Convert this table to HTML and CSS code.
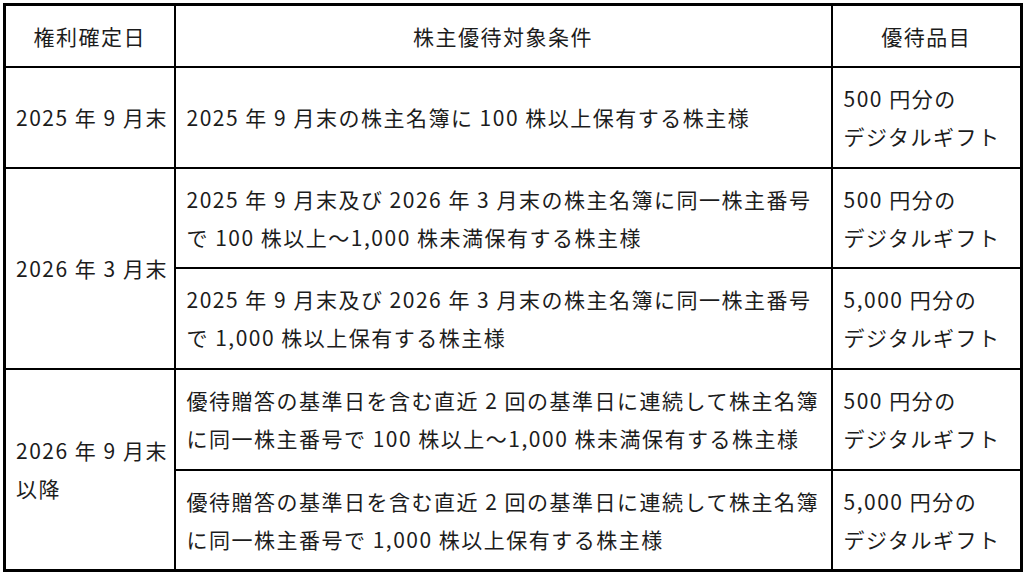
FILE: index.html
```html
<!DOCTYPE html>
<html lang="ja">
<head>
<meta charset="utf-8">
<link rel="stylesheet" href="styles.css">
</head>
<body>
<table class="yutai">
  <colgroup>
    <col class="c1">
    <col class="c2">
    <col class="c3">
  </colgroup>
  <tr class="head">
    <th>権利確定日</th>
    <th>株主優待対象条件</th>
    <th>優待品目</th>
  </tr>
  <tr class="row">
    <td class="date">2025 年 9 月末</td>
    <td class="cond"><span class="ln">2025 年 9 月末の株主名簿に 100 株以上保有する株主様</span></td>
    <td class="gift"><span class="ln">500 円分の</span><span class="ln">デジタルギフト</span></td>
  </tr>
  <tr class="row short">
    <td class="date" rowspan="2">2026 年 3 月末</td>
    <td class="cond"><span class="ln">2025 年 9 月末及び 2026 年 3 月末の株主名簿に同一株主番号</span><span class="ln">で 100 株以上～1,000 株未満保有する株主様</span></td>
    <td class="gift"><span class="ln">500 円分の</span><span class="ln">デジタルギフト</span></td>
  </tr>
  <tr class="row">
    <td class="cond"><span class="ln">2025 年 9 月末及び 2026 年 3 月末の株主名簿に同一株主番号</span><span class="ln">で 1,000 株以上保有する株主様</span></td>
    <td class="gift"><span class="ln">5,000 円分の</span><span class="ln">デジタルギフト</span></td>
  </tr>
  <tr class="row">
    <td class="date" rowspan="2"><span class="ln">2026 年 9 月末</span><span class="ln">以降</span></td>
    <td class="cond"><span class="ln">優待贈答の基準日を含む直近 2 回の基準日に連続して株主名簿</span><span class="ln">に同一株主番号で 100 株以上～1,000 株未満保有する株主様</span></td>
    <td class="gift"><span class="ln">500 円分の</span><span class="ln">デジタルギフト</span></td>
  </tr>
  <tr class="row">
    <td class="cond"><span class="ln">優待贈答の基準日を含む直近 2 回の基準日に連続して株主名簿</span><span class="ln">に同一株主番号で 1,000 株以上保有する株主様</span></td>
    <td class="gift"><span class="ln">5,000 円分の</span><span class="ln">デジタルギフト</span></td>
  </tr>
</table>
</body>
</html>
```

FILE: styles.css
```css
html, body {
  margin: 0;
  padding: 0;
  background: #ffffff;
}

body {
  padding: 3px 0 0 3px;
  font-family: "Noto Sans CJK JP", "Noto Sans", sans-serif;
  color: #1c1c1c;
}

.yutai {
  border-collapse: collapse;
  width: 1017px;
  table-layout: fixed;
  border: 3px solid #000;
  font-size: 21px;
  letter-spacing: 1.5px;
  line-height: 38px;
}

.c1 { width: 170px; }
.c2 { width: 657px; }
.c3 { width: 190px; }

.yutai th,
.yutai td {
  border: 2px solid #000;
  padding: 0 0 0 11px;
  vertical-align: middle;
  text-align: left;
  font-weight: normal;
}

.yutai th {
  text-align: center;
  padding: 0;
}

.head { height: 62px; }
.row { height: 101px; }
.row.short { height: 100px; }

.yutai td.date {
  padding-left: 10px;
}

.ln {
  display: block;
  white-space: nowrap;
}
```
